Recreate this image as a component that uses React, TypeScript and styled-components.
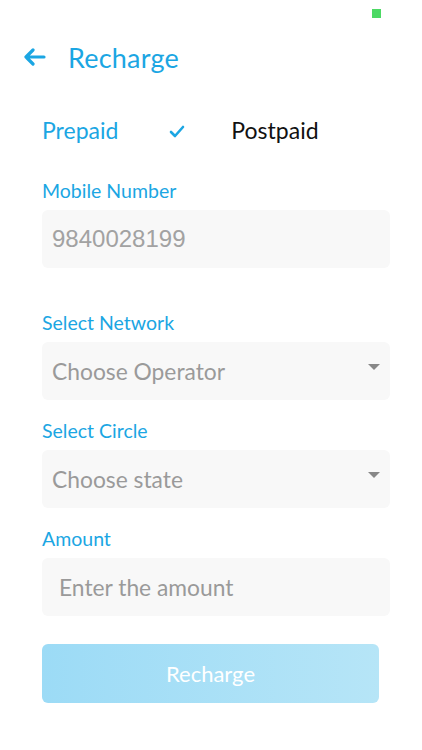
import styled, { createGlobalStyle } from "styled-components";

const GlobalStyle = createGlobalStyle`
  * { box-sizing: border-box; }
  body {
    margin: 0;
    background: #fff;
    font-family: Lato, "Noto Sans", sans-serif;
  }
`;

const BLUE = "#1ba6e3";

const Page = styled.div`
  width: 422px;
  height: 750px;
  background: #fff;
  display: flex;
  flex-direction: column;
  position: relative;
`;

const StatusBar = styled.div`
  height: 30px;
  display: flex;
  justify-content: flex-end;
  padding: 9px 41px 0 0;
`;

const Signal = styled.div`
  width: 9px;
  height: 9px;
  background: #4cd964;
`;

const Header = styled.div`
  display: flex;
  align-items: center;
  height: 54px;
  padding-left: 23px;
  gap: 22px;
`;

const BackButton = styled.button`
  border: none;
  background: none;
  padding: 0;
  display: flex;
  cursor: pointer;
`;

const Title = styled.h1`
  margin: 0;
  font-size: 27px;
  font-weight: 400;
  color: ${BLUE};
  letter-spacing: 0.2px;
`;

const Form = styled.div`
  padding: 0 32px 0 42px;
  display: flex;
  flex-direction: column;
`;

const Tabs = styled.div`
  display: flex;
  align-items: center;
  height: 38px;
  margin-top: 26px;
  margin-bottom: 32px;
`;

const Tab = styled.span<{ $active?: boolean }>`
  font-size: 23px;
  color: ${(p) => (p.$active ? BLUE : "#111")};
  margin-top: 2px;
`;

const Check = styled.span`
  display: flex;
  margin: 4px 46px 0 51px;
`;

const Label = styled.div`
  font-size: 19.5px;
  color: ${BLUE};
  line-height: 22px;
  margin-bottom: 8px;
`;

const Field = styled.div<{ $gap: number }>`
  display: flex;
  flex-direction: column;
  margin-bottom: ${(p) => p.$gap}px;
`;

const Box = styled.div<{ $indent?: number }>`
  height: 58px;
  background: #f8f8f8;
  border-radius: 6px;
  display: flex;
  align-items: center;
  justify-content: space-between;
  padding: 0 10px 0 ${(p) => p.$indent ?? 10}px;
  font-size: 22.8px;
  color: #9a9a9a;
`;

const Digits = styled.span`
  font-family: "Liberation Sans", Arial, sans-serif;
  font-size: 24px;
  color: #a2a2a2;
`;

const Caret = styled.span`
  width: 0;
  height: 0;
  border-left: 6px solid transparent;
  border-right: 6px solid transparent;
  border-top: 6px solid #888;
  margin-bottom: 8px;
`;

const SubmitButton = styled.button`
  width: 337px;
  height: 59px;
  margin-top: 28px;
  border: none;
  border-radius: 6px;
  background: linear-gradient(90deg, #9cdbf6 0%, #b6e5f7 100%);
  color: #fff;
  font-family: inherit;
  font-size: 22px;
  cursor: pointer;
`;

export default function App() {
  return (
    <Page>
      <GlobalStyle />
      <StatusBar>
        <Signal />
      </StatusBar>
      <Header>
        <BackButton>
          <svg width="23" height="18" viewBox="0 0 23 18" fill="none">
            <path
              d="M21 9H3M10 2L3 9L10 16"
              stroke={BLUE}
              strokeWidth="3.2"
              strokeLinecap="round"
              strokeLinejoin="round"
            />
          </svg>
        </BackButton>
        <Title>Recharge</Title>
      </Header>
      <Form>
        <Tabs>
          <Tab $active>Prepaid</Tab>
          <Check>
            <svg width="16" height="13" viewBox="0 0 16 13" fill="none">
              <path
                d="M2 7L6 11L14 2"
                stroke={BLUE}
                strokeWidth="2.6"
                strokeLinecap="round"
                strokeLinejoin="round"
              />
            </svg>
          </Check>
          <Tab>Postpaid</Tab>
        </Tabs>
        <Field $gap={44}>
          <Label>Mobile Number</Label>
          <Box>
            <Digits>9840028199</Digits>
          </Box>
        </Field>
        <Field $gap={20}>
          <Label>Select Network</Label>
          <Box>
            <span>Choose Operator</span>
            <Caret />
          </Box>
        </Field>
        <Field $gap={20}>
          <Label>Select Circle</Label>
          <Box>
            <span>Choose state</span>
            <Caret />
          </Box>
        </Field>
        <Field $gap={0}>
          <Label>Amount</Label>
          <Box $indent={17}>
            <span>Enter the amount</span>
          </Box>
        </Field>
        <SubmitButton>Recharge</SubmitButton>
      </Form>
    </Page>
  );
}
